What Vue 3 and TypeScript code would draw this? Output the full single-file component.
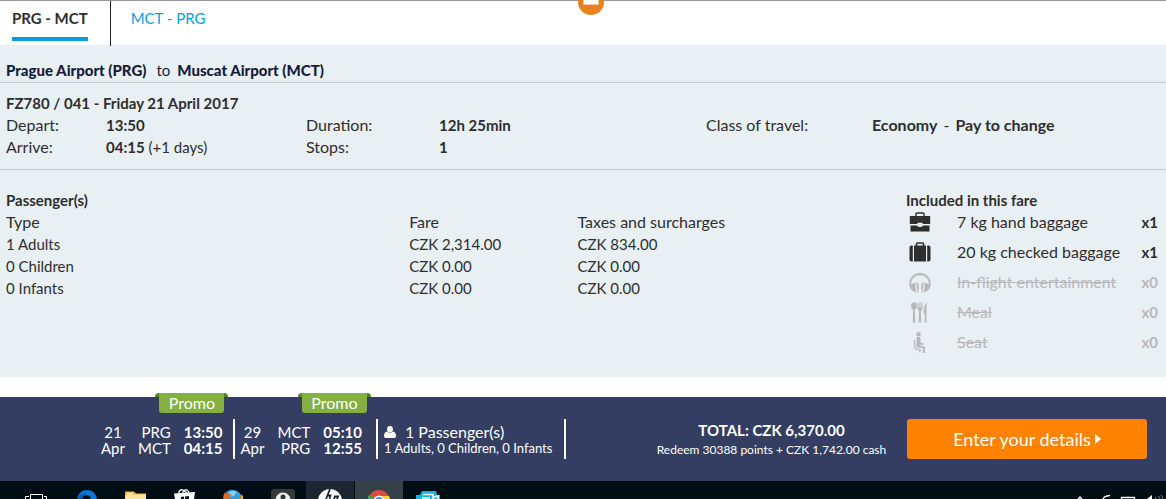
<script setup lang="ts">
import { ref } from 'vue'

interface Leg { day: string; month: string; from: string; to: string; depart: string; arrive: string }
interface FareRow { type: string; fare: string; taxes: string }
interface Extra { icon: string; label: string; count: string; included: boolean }

const tabs: string[] = ['PRG - MCT', 'MCT - PRG']
const activeTab = ref(0)

const legs: Leg[] = [
  { day: '21', month: 'Apr', from: 'PRG', to: 'MCT', depart: '13:50', arrive: '04:15' },
  { day: '29', month: 'Apr', from: 'MCT', to: 'PRG', depart: '05:10', arrive: '12:55' },
]

const fares: FareRow[] = [
  { type: '1 Adults', fare: 'CZK 2,314.00', taxes: 'CZK 834.00' },
  { type: '0 Children', fare: 'CZK 0.00', taxes: 'CZK 0.00' },
  { type: '0 Infants', fare: 'CZK 0.00', taxes: 'CZK 0.00' },
]

const extras: Extra[] = [
  { icon: 'briefcase', label: '7 kg hand baggage', count: 'x1', included: true },
  { icon: 'suitcase', label: '20 kg checked baggage', count: 'x1', included: true },
  { icon: 'headphones', label: 'In-flight entertainment', count: 'x0', included: false },
  { icon: 'meal', label: 'Meal', count: 'x0', included: false },
  { icon: 'seat', label: 'Seat', count: 'x0', included: false },
]
</script>

<template>
  <div class="page">
    <svg class="marker" viewBox="0 0 26 16" aria-hidden="true">
      <circle cx="13" cy="2" r="13" fill="#e8821e" />
      <rect x="5" y="0" width="16" height="5" fill="#f3c6a0" />
      <rect x="6" y="0" width="14" height="4" fill="#fff" />
    </svg>

    <nav class="tabs">
      <button
        v-for="(tab, i) in tabs"
        :key="tab"
        type="button"
        class="tab"
        :class="{ active: i === activeTab }"
        @click="activeTab = i"
      ><span>{{ tab }}</span></button>
    </nav>

    <main class="panel">
      <h1 class="route"><b>Prague Airport (PRG)</b><span>to</span><b>Muscat Airport (MCT)</b></h1>

      <section class="flight">
        <h2>FZ780 / 041 - Friday 21 April 2017</h2>
        <dl class="facts">
          <dt>Depart:</dt><dd><b>13:50</b></dd>
          <dt>Duration:</dt><dd><b>12h 25min</b></dd>
          <dt>Class of travel:</dt><dd class="cabin"><b>Economy</b><span>-</span><b>Pay to change</b></dd>
          <dt>Arrive:</dt><dd><b>04:15</b> (+1 days)</dd>
          <dt>Stops:</dt><dd><b>1</b></dd>
        </dl>
      </section>

      <div class="details">
        <section>
          <h2>Passenger(s)</h2>
          <table class="fares">
            <thead>
              <tr><th scope="col">Type</th><th scope="col">Fare</th><th scope="col">Taxes and surcharges</th></tr>
            </thead>
            <tbody>
              <tr v-for="row in fares" :key="row.type">
                <td>{{ row.type }}</td><td>{{ row.fare }}</td><td>{{ row.taxes }}</td>
              </tr>
            </tbody>
          </table>
        </section>

        <section>
          <h2>Included in this fare</h2>
          <ul class="extras">
            <li v-for="item in extras" :key="item.label" :class="{ off: !item.included }">
              <svg class="icon" viewBox="0 0 22 22" fill="currentColor" aria-hidden="true">
                <g v-if="item.icon === 'briefcase'">
                  <path d="M7 5V3q0-1 1-1h6q1 0 1 1v2" fill="none" stroke="currentColor" stroke-width="1.4" />
                  <path d="M1.500 5h19q.7 0 .7.700v7.300h-7.200q0-1.500-3-1.500t-3 1.500H.8V5.700Q.8 5 1.500 5z" />
                  <path d="M1.500 14.500H8q.5 1.500 3 1.500t3-1.500h6.500v6h-19z" />
                </g>
                <g v-else-if="item.icon === 'suitcase'">
                  <path d="M7.500 5V2.800q0-.8.800-.8h5.400q.8 0 .8.800V5" fill="none" stroke="currentColor" stroke-width="1.600" />
                  <path d="M5 4.500h12V20.500H5zM3.800 4.500v16H2.500Q.5 20.500.5 18.500v-12q0-2 2-2zM18.200 4.500v16h1.300q2 0 2-2v-12q0-2-2-2z" />
                </g>
                <g v-else-if="item.icon === 'headphones'">
                  <path d="M2.300 17A9.700 9.700 0 1 1 19.700 17" fill="none" stroke="currentColor" stroke-width="1.800" />
                  <path d="M6 11.500 7.300 21.500Q1.500 20 1.500 16 1.500 12.500 6 11.500zM16 11.500l-1.300 10q5.800-1.500 5.800-5.500 0-3.500-4.500-4.500z" />
                  <path d="M7.300 11.300Q9.500 11 9.700 14l-.2 7.500H8.500zM14.700 11.300Q12.500 11 12.300 14l.2 7.500h1z" />
                </g>
                <g v-else-if="item.icon === 'meal'">
                  <ellipse cx="5" cy="5" rx="2.900" ry="3.800" />
                  <path d="M4.200 8h1.600l.5 13.500H3.700zM8.500 1.500h1v5h.9v-5h1.200v5h.9v-5h1v5.500q0 2-1.600 2.700l.5 11.800H9.600l.5-11.800Q8.500 9 8.500 7zM17.500 1.500v20h-2l.4-8.500h-1.200Q14.500 4 17.500 1.500z" />
                </g>
                <g v-else>
                  <circle cx="9.500" cy="3.200" r="2.300" />
                  <path d="M8.300 6h2q1.200 0 1.200 1.500v4l3.500 1v1.300l-3.500-.3v1.500l4 .5q1 .2.800 1.500l-.8 3.500 1.500.5v.8h-3.500l.8-4.500-5.300-.5q-1.500-.3-1.500-2V7q0-1 .8-1z" />
                  <path d="M5 9l1.300 8.500 5 1.500-.8 2.500" fill="none" stroke="currentColor" stroke-width="1.300" />
                </g>
              </svg>
              <span class="label">{{ item.label }}</span>
              <b>{{ item.count }}</b>
            </li>
          </ul>
        </section>
      </div>
    </main>

    <footer class="summary">
      <div class="trip">
        <div v-for="leg in legs" :key="leg.day" class="leg">
          <span class="promo">Promo</span>
          <span>{{ leg.day }}<br />{{ leg.month }}</span>
          <span class="codes">{{ leg.from }}<br />{{ leg.to }}</span>
          <b>{{ leg.depart }}<br />{{ leg.arrive }}</b>
        </div>
        <div class="people">
          <p class="count">
            <svg viewBox="0 0 12 12" fill="#fff" aria-hidden="true">
              <ellipse cx="6" cy="3.200" rx="2.900" ry="3.200" />
              <path d="M3 5.500q3 2.500 6 0 3 .8 3 4.500 0 2-1.500 2h-9Q0 12 0 10 0 6.300 3 5.500z" />
            </svg>1 Passenger(s)
          </p>
          <p class="small">1 Adults, 0 Children, 0 Infants</p>
        </div>
      </div>
      <div class="total">
        <p class="sum">TOTAL: CZK 6,370.00</p>
        <p class="points">Redeem 30388 points + CZK 1,742.00 cash</p>
      </div>
      <button type="button" class="next">
        Enter your details
        <svg viewBox="0 0 6 10" aria-hidden="true"><path d="M0 0 6 5 0 10z" fill="#fff" /></svg>
      </button>
    </footer>

    <div class="taskbar" aria-hidden="true">
      <div class="slot">
        <svg viewBox="0 0 48 18"><path d="M18.500 18v-4.500h12V18M17 15.500h-3.500V18M32 15.500h2.500V18" fill="none" stroke="#fff" /></svg>
      </div>
      <div class="slot">
        <svg viewBox="0 0 48 18"><path d="M16 18Q18 9 26 9q8 0 10 9h-6q-1-4-5-4-3 0-4 4z" fill="#0078d7" /><path d="M16 18q3-6 10-6-4 2-5 6z" fill="#0a5cae" /></svg>
      </div>
      <div class="slot">
        <svg viewBox="0 0 48 18"><path d="M15 10.500h9l2 2h10V18H15z" fill="#e8b93c" /><path d="M17 11.500h6v2h13V18H15v-4h2z" fill="#fce69b" /></svg>
      </div>
      <div class="slot">
        <svg viewBox="0 0 48 18"><path d="M15 12.500 36 11l-1 7H16z" fill="#fff" /><path d="M20 14V11q1-3 4-2l4 3M24 12q0-4 4-3 2 1 2 4" fill="none" stroke="#fff" stroke-width="1.300" /><path d="m22 16 3-.5V18h-3zM26 15.500l4-.5v3h-4z" fill="#010d15" /></svg>
      </div>
      <div class="slot">
        <svg viewBox="0 0 48 18"><path d="M17 13Q20 8 26 9q7 1 8 9H17z" fill="#299dd8" /><path d="M21 11q4-2 8 0l-3 4-5 1z" fill="#80d2ee" /><path d="M15 18q0-4 2-7l1 2q3-1 6 1l-2 2-2 2zM34 14q2 2 1 4h-4z" fill="#e66a1f" /><path d="M33 13q2 2 2 5h-2z" fill="#f5b52e" /></svg>
      </div>
      <div class="slot">
        <svg viewBox="0 0 48 18"><rect x="14" y="8" width="24" height="14" rx="3" fill="#38393b" /><circle cx="26" cy="19" r="7.500" fill="#eee" /><circle cx="26" cy="16" r="2.500" fill="#333" /></svg>
      </div>
      <div class="slot lit">
        <svg viewBox="0 0 48 18"><circle cx="24" cy="20" r="12" fill="#fff" /><path d="m24 8-4 10M21 14.500h3.500l-1 3.500M29 15l-1 3M28 15.500h4l-1 3" fill="none" stroke="#1b2631" stroke-width="1.800" /></svg>
      </div>
      <div class="slot bright">
        <svg viewBox="0 0 48 18"><circle cx="24" cy="20" r="11" fill="#dd4b3e" /><path d="M14 14q-2 2-1 4h6z" fill="#2da94f" /><path d="M25 15h9q1 2 1 3h-6z" fill="#fdd23c" /><circle cx="24" cy="20" r="5.500" fill="#fff" /><circle cx="24" cy="20" r="4" fill="#4688f1" /></svg>
      </div>
      <div class="slot">
        <svg viewBox="0 0 48 18"><path d="M18 10h14l1 4h3v4H12v-4h4z" fill="#12b5dc" /><path d="M19 13.500h10V18M18 17h8M30 16l4-1v3" fill="none" stroke="#fff" stroke-width="1.500" /></svg>
      </div>
      <svg class="tray" viewBox="0 0 92 18">
        <path d="m4 18 2-2 2 2M29 18q1-3 7-3.500M47.500 18v-1.500h13V18" fill="none" stroke="#fff" stroke-width="1.300" />
        <path d="M70 18h3l5-4v4z" fill="#fff" />
        <path d="M81 16q1 1 1 2M84 15q2 1 2 3M87 14q2 2 2 4" fill="none" stroke="#7a828a" />
      </svg>
    </div>
  </div>
</template>

<style>
body { margin: 0; background: #fff; overflow: hidden; }
</style>

<style scoped>
* { box-sizing: border-box; }
.page {
  position: relative;
  border-top: 1px solid #999;
  font-family: Lato, "Open Sans", sans-serif;
  font-size: 15px;
  line-height: 22px;
  color: #2e2e2e;
}
h1, h2, p, dl, dd, ul { margin: 0; padding: 0; }
h1, h2 { font-size: 15px; line-height: 22px; }
button { font: inherit; border: 0; cursor: pointer; }
.marker { position: absolute; top: -1px; left: 50.700%; width: 26px; height: 16px; transform: translateX(-50%); }

.tabs { display: flex; height: 44px; }
.tab { padding: 6px 20px 4px; background: none; color: #0d9be3; display: flex; height: 45px; }
.tab span { height: 34px; }
.tab.active { padding-left: 12px; padding-right: 22px; border-right: 1px solid #222; color: #2e2e2e; font-weight: 700; }
.tab.active span { border-bottom: 4px solid #0a9be0; }

.panel { background: #e8f0f4; padding-bottom: 16px; }
.route { padding: 14px 6px 1px; border-bottom: 1px solid #c6c9cb; color: #171c3c; }
.route span { font-weight: 400; margin: 0 7px 0 10px; }
.flight { padding: 9px 0 11px 6px; border-bottom: 1px solid #c6c9cb; }
.facts { display: grid; grid-template-columns: 100fr 200fr 133fr 267fr 166fr 294fr; }
.facts dt, .cabin, .fares th, .label { font-size: 16px; }
.cabin span { margin: 0 6px; }

.details { display: grid; grid-template-columns: 900fr 260fr; padding: 19px 0 0 6px; }
.fares { border-collapse: collapse; table-layout: fixed; width: 100%; }
.fares th, .fares td { padding: 0; text-align: left; font-weight: 400; }
.fares th:first-child { width: 44.800%; }
.fares th:nth-child(2) { width: 18.700%; }
.extras { list-style: none; }
.extras li { display: grid; grid-template-columns: 51px 1fr auto; padding-right: 8px; margin-bottom: 8px; }
.icon { width: 22px; height: 22px; margin-left: 3px; }
.off { color: #b9b7b9; }
.off .label { text-decoration: line-through; }

.summary {
  display: grid;
  grid-template-columns: 101fr 465fr 90fr 231fr 20fr 240fr 19fr;
  margin-top: 20px;
  padding: 22px 0;
  background: #333e62;
  color: #fff;
}
.trip { grid-column: 2; display: flex; }
.leg { position: relative; display: flex; gap: 13px; padding: 5px 11px 3px 0; line-height: 16px; border-right: 2px solid #fff; text-align: center; }
.leg + .leg { padding-left: 5px; padding-right: 14px; }
.codes { text-align: right; }
.promo {
  position: absolute;
  top: -26px;
  right: 9px;
  width: 65px;
  height: 20px;
  font-size: 16px;
  line-height: 20px;
  border-radius: 0 0 3px 3px;
  background: #83b041;
}
.promo::before, .promo::after { content: ""; position: absolute; top: 0; width: 4px; height: 4px; background: #55802a; }
.promo::before { left: -4px; border-radius: 4px 0 0 0; }
.promo::after { right: -4px; border-radius: 0 4px 0 0; }
.people { flex: 1; padding: 5px 0 3px 6px; border-right: 2px solid #fff; line-height: 16px; white-space: nowrap; }
.count { display: flex; align-items: center; gap: 9px; font-size: 16px; }
.count svg { width: 12px; height: 12px; }
.small { font-size: 13px; }
.total { grid-column: 4; text-align: center; white-space: nowrap; }
.sum { font-weight: 700; }
.points { font-size: 12px; line-height: 18px; }
.next {
  grid-column: 6;
  display: flex;
  align-items: center;
  justify-content: center;
  gap: 4px;
  padding: 0;
  border-radius: 3px;
  background: #ff8300;
  color: #fff;
  font-size: 18px;
}
.next svg { width: 6px; height: 10px; }

.taskbar { display: flex; height: 18px; background: #010d15; padding-left: 12px; overflow: hidden; }
.slot { width: 48px; margin-right: 1px; flex: none; }
.slot svg { display: block; width: 48px; height: 18px; }
.lit { background: #1b2631; }
.bright { background: #354149; }
.tray { width: 92px; height: 18px; margin-left: auto; }
</style>
